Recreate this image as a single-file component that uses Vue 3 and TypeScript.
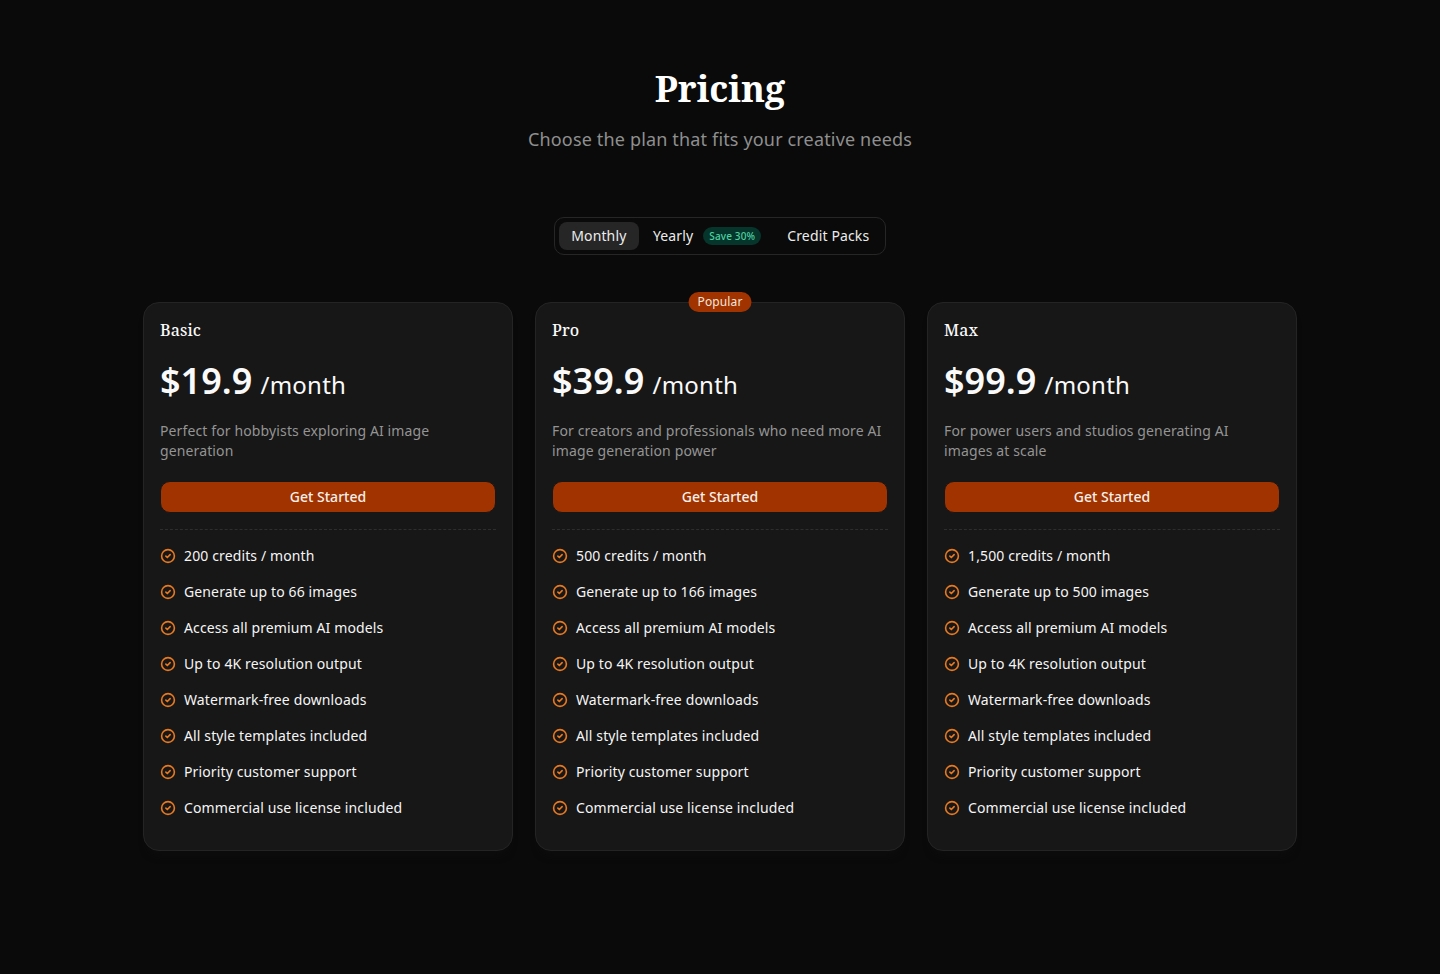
<script setup lang="ts">
interface Plan { name: string; price: string; desc: string; credits: string; images: string; popular?: boolean }
const plans: Plan[] = [
  { name: 'Basic', price: '$19.9', desc: 'Perfect for hobbyists exploring AI image generation', credits: '200 credits / month', images: 'Generate up to 66 images' },
  { name: 'Pro', price: '$39.9', desc: 'For creators and professionals who need more AI image generation power', credits: '500 credits / month', images: 'Generate up to 166 images', popular: true },
  { name: 'Max', price: '$99.9', desc: 'For power users and studios generating AI images at scale', credits: '1,500 credits / month', images: 'Generate up to 500 images' },
]
const common = ['Access all premium AI models', 'Up to 4K resolution output', 'Watermark-free downloads', 'All style templates included', 'Priority customer support', 'Commercial use license included']
const features = (p: Plan) => [p.credits, p.images, ...common]
</script>

<template>
  <main class="page">
    <header class="head">
      <h1>Pricing</h1>
      <p>Choose the plan that fits your creative needs</p>
    </header>
    <div class="tabs-wrap">
      <div class="tabs">
        <button class="tab active">Monthly</button>
        <button class="tab">Yearly <span class="save">Save 30%</span></button>
        <button class="tab">Credit Packs</button>
      </div>
    </div>
    <section class="cards">
      <article v-for="p in plans" :key="p.name" class="card">
        <span v-if="p.popular" class="badge">Popular</span>
        <h2>{{ p.name }}</h2>
        <div class="price"><strong>{{ p.price }}</strong> <span>/month</span></div>
        <p class="desc">{{ p.desc }}</p>
        <button class="cta">Get Started</button>
        <ul>
          <li v-for="f in features(p)" :key="f">
            <svg viewBox="0 0 24 24" width="16" height="16" fill="none" stroke="#e8791f" stroke-width="2.4" stroke-linecap="round" stroke-linejoin="round">
              <circle cx="12" cy="12" r="9.6" />
              <path d="m8.8 12.2 2.2 2.1 4.2-4.4" />
            </svg>
            {{ f }}
          </li>
        </ul>
      </article>
    </section>
  </main>
</template>

<style>
html, body { margin: 0; background: #0a0a0a; }
</style>

<style scoped>
.page { min-height: 974px; box-sizing: border-box; padding-top: 64px; background: #0a0a0a; font-family: "Noto Sans", sans-serif; color: #fafafa; letter-spacing: 0.01em; }
.head { text-align: center; }
h1 { margin: 0; font-family: "Noto Serif", "DejaVu Serif", serif; font-size: 36px; line-height: 50px; font-weight: 700; color: #fff; letter-spacing: 0; }
.head p { margin: 11px 0 0; font-size: 18px; line-height: 28px; color: #8f8f8f; }
.tabs-wrap { display: flex; justify-content: center; margin-top: 64px; }
.tabs { display: flex; align-items: center; gap: 0; height: 36px; padding: 0 4px; border: 1px solid #262626; border-radius: 10px; }
.tab { display: flex; align-items: center; height: 28px; padding: 0 12px; background: none; border: 0; border-radius: 8px; font: 14px/20px "Noto Sans", sans-serif; letter-spacing: 0.01em; color: #ececec; }
.tab.active { background: #262626; padding: 0 12.5px; }
.tab:nth-child(2) { padding-left: 14px; padding-right: 14px; }
.save { margin-left: 10px; padding: 0 6px; height: 18px; line-height: 18px; border-radius: 9px; font-size: 10px; font-weight: 500; color: #4fd0a0; background: #05352b; }
.cards { display: grid; grid-template-columns: repeat(3, 370px); gap: 22px; justify-content: center; margin-top: 47px; }
.card { position: relative; box-sizing: border-box; height: 549px; padding: 16px; border: 1px solid #242424; border-radius: 16px; background: #171717; box-shadow: 0 8px 10px -6px #0e0e0e; letter-spacing: 0.125px; }
.badge { position: absolute; top: -11px; left: 50%; transform: translateX(-50%); padding: 0 9px; height: 20px; line-height: 20px; border-radius: 10px; background: #a03300; color: #f5e6dc; font-size: 12px; white-space: nowrap; }
h2 { margin: 0; font-family: "Noto Serif", "DejaVu Serif", serif; font-size: 16px; line-height: 22px; font-weight: 500; color: #fafafa; }
.price { margin-top: 16px; line-height: 48px; letter-spacing: 0; }
.price strong { font-size: 36px; font-weight: 600; color: #fafafa; }
.price span { font-size: 24px; margin-left: 4px; letter-spacing: 0.01em; }
.desc { margin: 9px 0 0; font-size: 14px; line-height: 20px; color: #949494; height: 40px; }
.cta { display: block; width: 100%; height: 32px; margin-top: 20px; border: 1px solid #171717; border-radius: 10px; background: #a03300; color: #f8efe8; font: 500 14px/20px "Noto Sans", sans-serif; box-sizing: border-box; }
ul { list-style: none; margin: 16px 0 0; padding: 8px 0 0; border-top: 1px dashed #2e2e2e; }
li { display: flex; align-items: center; gap: 8px; height: 36px; font-size: 14px; line-height: 20px; color: #f5f5f5; }
</style>
